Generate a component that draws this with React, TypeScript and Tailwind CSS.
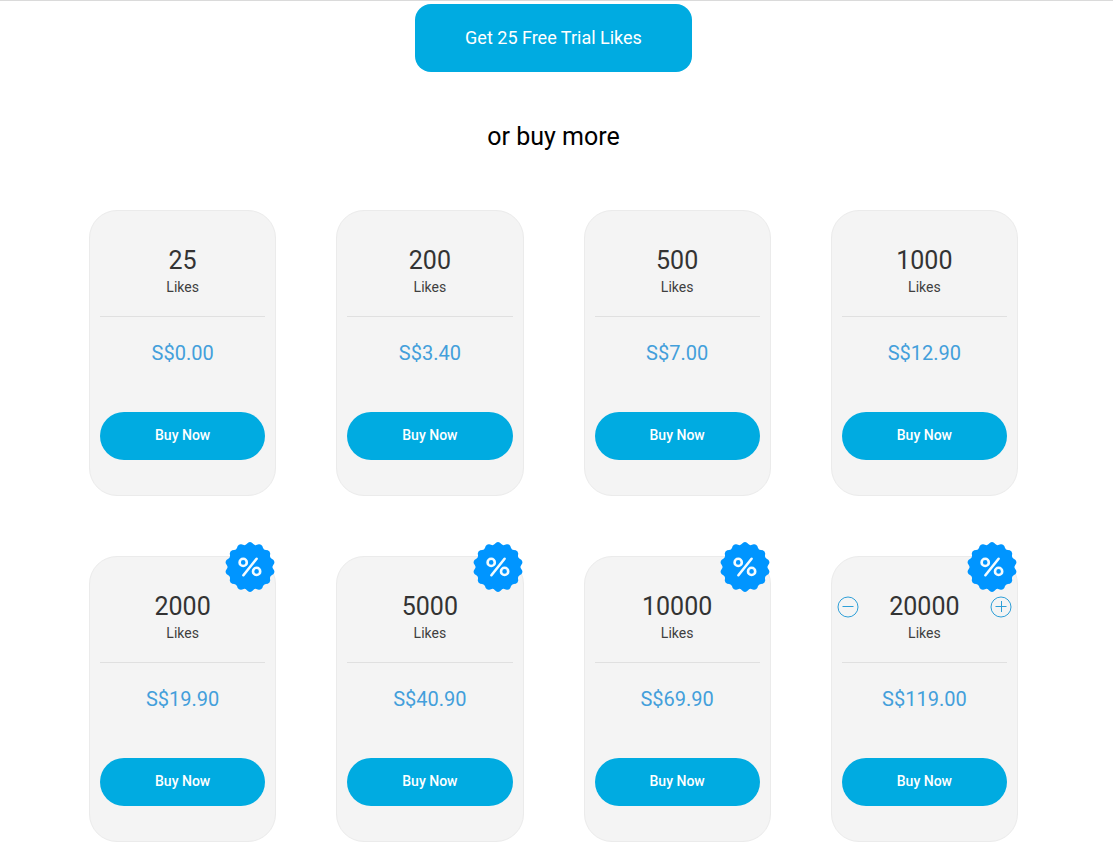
const packages = [
  { amount: 25, price: 'S$0.00' },
  { amount: 200, price: 'S$3.40' },
  { amount: 500, price: 'S$7.00' },
  { amount: 1000, price: 'S$12.90' },
  { amount: 2000, price: 'S$19.90', discount: true },
  { amount: 5000, price: 'S$40.90', discount: true },
  { amount: 10000, price: 'S$69.90', discount: true },
  { amount: 20000, price: 'S$119.00', discount: true, adjustable: true }
];

// Scalloped edge of the discount seal, with a tip pointing straight up
function sealPath(teeth: number) {
  const point = (radius: number, turn: number) => {
    const angle = (turn / teeth) * Math.PI * 2 - Math.PI / 2;
    return `${(25 + radius * Math.cos(angle)).toFixed(2)} ${(25 + radius * Math.sin(angle)).toFixed(2)}`;
  };
  let d = `M${point(24.4, -0.18)}`;
  for (let i = 0; i < teeth; i++) {
    d += `Q${point(25.6, i)} ${point(24.4, i + 0.18)}`;
    d += `L${point(23.2, i + 0.32)}Q${point(21.8, i + 0.5)} ${point(23.2, i + 0.68)}L${point(24.4, i + 0.82)}`;
  }
  return d + 'Z';
}

function DiscountBadge() {
  return (
    <svg viewBox="0 0 50 50" role="img" aria-label="Discount" className="absolute right-0 -top-[15px] w-[50px] h-[50px]">
      <path d={sealPath(14)} fill="#0095ff" />
      <g fill="none" stroke="#f3fbff" strokeWidth="2.6">
        <circle cx="18.2" cy="20.4" r="3.6" />
        <circle cx="31.6" cy="29.4" r="3.6" />
        <path d="M31.6 16.8 18.4 33.2" strokeLinecap="round" />
      </g>
    </svg>
  );
}

function StepButton({ label, plus }: { label: string; plus?: boolean }) {
  return (
    <button type="button" aria-label={label} className="w-[22px] h-[22px] text-[#2e9fd8]">
      <svg viewBox="0 0 22 22" fill="none" stroke="currentColor" className="w-full h-full">
        <circle cx="11" cy="11" r="10" />
        <path d="M5.5 10.5h11" />
        {plus && <path d="M11.5 5v11" />}
      </svg>
    </button>
  );
}

export default function App() {
  return (
    <main className="bg-white border-t border-[#dadada] pt-[3px] pb-2 pl-[89px] pr-[95px] font-[Roboto,sans-serif]">
      <div className="flex flex-col items-center">
        <button type="button" className="h-[68px] px-[50px] rounded-2xl bg-[#00abe1] text-lg text-white">
          Get 25 Free Trial Likes
        </button>
        <h2 className="mt-[50px] text-[25px] leading-[30px] text-black">or buy more</h2>
      </div>

      <div className="mt-[58px] grid grid-cols-4 gap-[60px]">
        {packages.map((item) => (
          <article
            key={item.amount}
            className="relative pt-[35px] pb-[35px] rounded-[28px] border border-[#ebebeb] bg-[#f4f4f4] text-center"
          >
            {item.discount && <DiscountBadge />}
            <div className="flex items-center justify-between px-[5px]">
              {item.adjustable && <StepButton label="Fewer likes" />}
              <h3 className="flex-1 text-[25px] leading-[30px] text-[#333]">{item.amount}</h3>
              {item.adjustable && <StepButton label="More likes" plus />}
            </div>
            <div className="px-[10px]">
              <p className="mt-px pb-[19px] border-b border-[#e0e0e0] text-sm text-[#3f3f3f]">Likes</p>
              <p className="mt-[21px] text-xl leading-[30px] text-[#439fdb]">{item.price}</p>
              <button
                type="button"
                className="mt-11 w-full h-12 pb-0.5 rounded-full bg-[#00abe1] text-sm font-medium text-white"
              >
                Buy Now
              </button>
            </div>
          </article>
        ))}
      </div>
    </main>
  );
}
